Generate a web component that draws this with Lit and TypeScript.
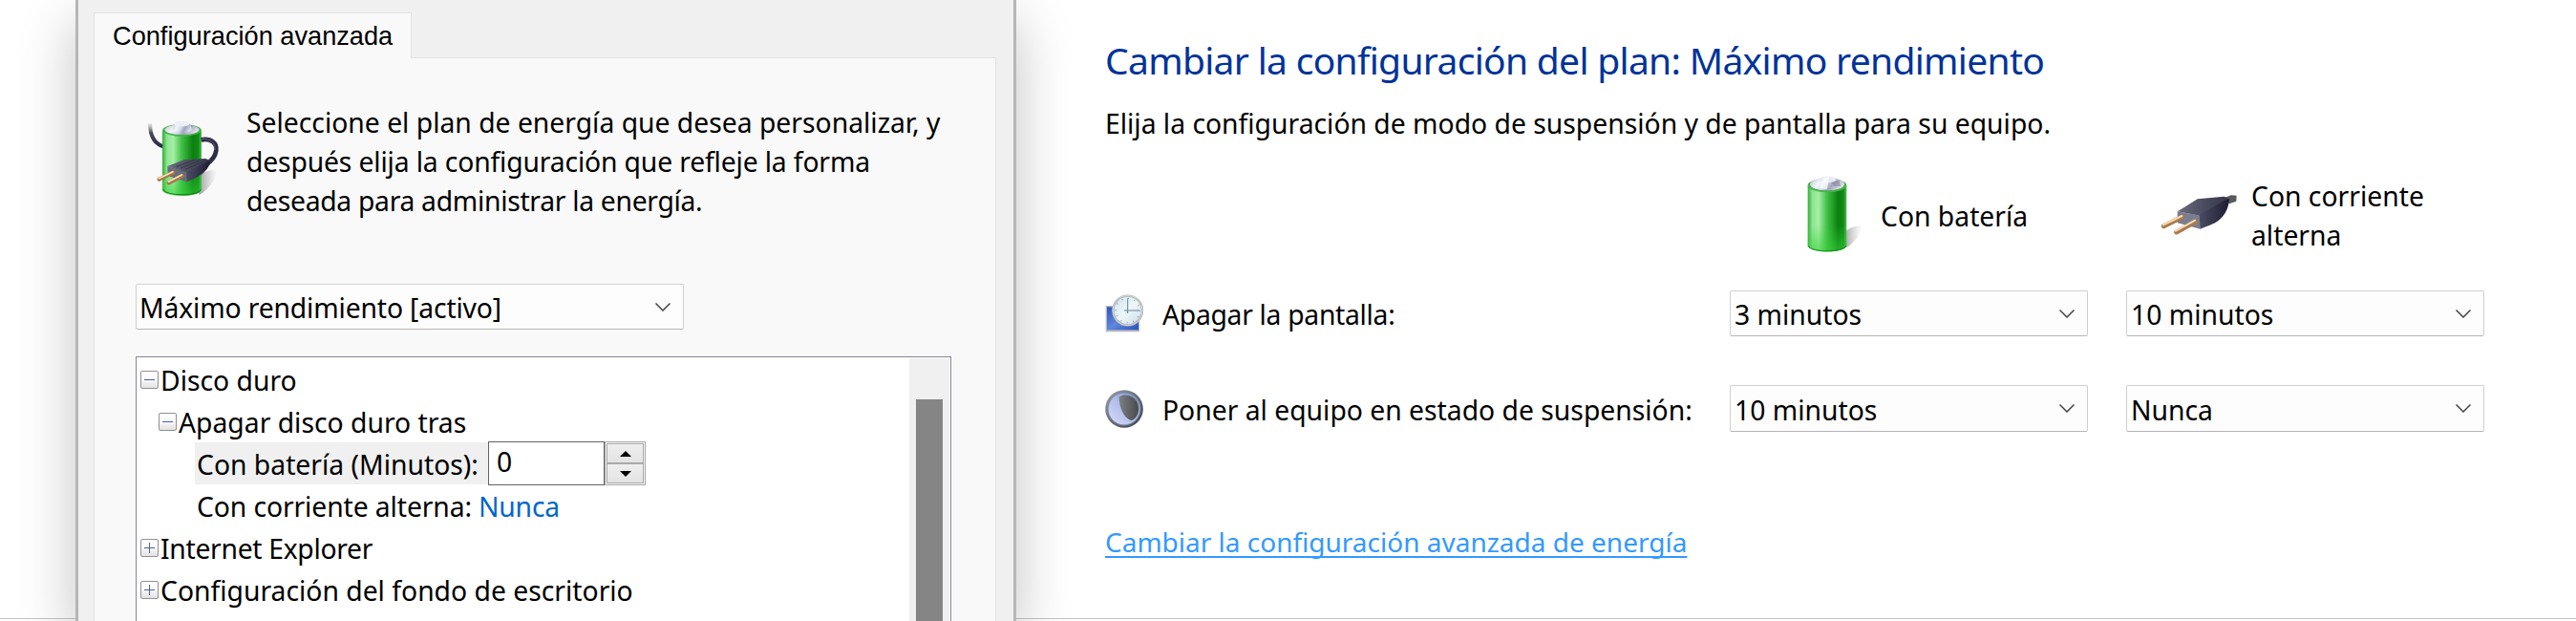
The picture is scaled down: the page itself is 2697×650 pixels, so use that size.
import { html, css, svg, LitElement, nothing } from 'lit'
import { customElement, property } from 'lit/decorators.js'

const batteryGradients = svg`
  <linearGradient id="body" x1="0" x2="1" y1="0" y2="0">
    <stop offset="0" stop-color="#2fae35" />
    <stop offset="0.12" stop-color="#8fe592" />
    <stop offset="0.28" stop-color="#a4efa6" />
    <stop offset="0.5" stop-color="#3fbf43" />
    <stop offset="0.78" stop-color="#0b800f" />
    <stop offset="0.92" stop-color="#138a18" />
    <stop offset="1" stop-color="#4cc152" />
  </linearGradient>
  <linearGradient id="glow" x1="0" x2="0" y1="0" y2="1">
    <stop offset="0.6" stop-color="#35d03a" stop-opacity="0" />
    <stop offset="1" stop-color="#35d03a" stop-opacity="0.6" />
  </linearGradient>
  <linearGradient id="cap" x1="0" x2="1" y1="0" y2="0.3">
    <stop offset="0" stop-color="#b9bccd" />
    <stop offset="0.35" stop-color="#f4f6fb" />
    <stop offset="0.55" stop-color="#d3dcea" />
    <stop offset="0.75" stop-color="#a2a4be" />
    <stop offset="1" stop-color="#dcdce8" />
  </linearGradient>
  <linearGradient id="shadow" x1="0" x2="1" y1="0" y2="0">
    <stop offset="0" stop-color="#555" stop-opacity="0.55" />
    <stop offset="1" stop-color="#999" stop-opacity="0" />
  </linearGradient>
`

const plugGradients = svg`
  <linearGradient id="side" x1="0" x2="1" y1="0" y2="0">
    <stop offset="0" stop-color="#4c4e63" />
    <stop offset="1" stop-color="#1c1b33" />
  </linearGradient>
  <linearGradient id="top" x1="0" x2="1" y1="0" y2="0">
    <stop offset="0" stop-color="#6b6d7e" />
    <stop offset="0.5" stop-color="#4a4c5f" />
    <stop offset="1" stop-color="#33344b" />
  </linearGradient>
`

const powerIcon = html`
  <svg width="100" height="110" viewBox="0 0 300 330">
    <defs>
      ${batteryGradients}${plugGradients}
      <linearGradient id="cable" x1="0" x2="0" y1="0" y2="1">
        <stop offset="0" stop-color="#777" stop-opacity="0.1" />
        <stop offset="0.4" stop-color="#4a4b55" />
        <stop offset="1" stop-color="#2c2b45" />
      </linearGradient>
    </defs>
    <path d="M205 282 C228 272 256 240 262 208 C246 200 226 206 208 220 Z" fill="url(#shadow)" />
    <path d="M51 57 C51 100 66 124 98 131" fill="none" stroke="url(#cable)" stroke-width="12" />
    <path d="M90 82 V266 C94 290 208 290 213 266 V82 Z" fill="url(#body)" />
    <path d="M90 82 V266 C94 290 208 290 213 266 V82 Z" fill="url(#glow)" />
    <path d="M92 264 C98 287 206 287 211 264" fill="none" stroke="#0c7d12" stroke-width="3" />
    <ellipse cx="151.500" cy="79" rx="61" ry="19" fill="#42b447" />
    <ellipse cx="151.500" cy="77" rx="54" ry="16" fill="url(#cap)" />
    <path d="M125 64 C125 48 178 48 178 64 L184 78 C174 90 130 90 121 76 Z" fill="url(#cap)" />
    <ellipse cx="151.500" cy="59" rx="24" ry="8" fill="#e9f0f7" />
    <path d="M212 109 C244 103 262 120 259 143 C256 164 245 176 225 188" fill="none" stroke="#2d2d48" stroke-width="14" />
    <path d="M214 107 C244 103 258 122 255 141" fill="none" stroke="#63647c" stroke-width="3" />
    <path d="M106 192 L160 171 L226 168 L244 176 L230 196 L165 212 Z" fill="url(#top)" />
    <path d="M165 212 L230 178 L242 178 C232 204 218 222 166 241 Z" fill="url(#side)" />
    <path d="M106 192 L165 211 L166 241 L107 222 Z" fill="#686a7f" />
    <path d="M134 194 L192 172 M148 198 L206 175 M162 202 L218 178" stroke="#343548" stroke-width="3" />
    <path d="M80 233 L124 212 M110 244 L152 222" stroke="#a87746" stroke-width="13" stroke-linecap="round" />
    <path d="M79 230 L123 209 M109 241 L151 219" stroke="#ffe2b8" stroke-width="5" stroke-linecap="round" />
  </svg>
`

const batteryIcon = html`
  <svg width="70" height="90" viewBox="45 30 210 270">
    <defs>${batteryGradients}</defs>
    <path d="M182 270 C206 262 232 232 240 202 C222 194 202 204 186 216 Z" fill="url(#shadow)" />
    <path d="M68 72 V262 C74 286 184 286 190 262 V72 Z" fill="url(#body)" />
    <path d="M68 72 V262 C74 286 184 286 190 262 V72 Z" fill="url(#glow)" />
    <path d="M70 262 C78 284 180 284 188 262" fill="none" stroke="#138419" stroke-width="3" />
    <ellipse cx="129" cy="72" rx="61" ry="22" fill="#48b34d" />
    <ellipse cx="129" cy="68" rx="54" ry="20" fill="url(#cap)" />
    <ellipse cx="129" cy="54" rx="29" ry="10" fill="#e6eaf3" />
    <path d="M118 48 L136 46 L128 84 L104 82 Z" fill="#fff" opacity="0.7" />
    <path d="M142 62 L166 56 L172 74 L152 76 Z" fill="#85879f" opacity="0.6" />
  </svg>
`

const plugIcon = html`
  <svg width="87" height="50" viewBox="1164 90 261 150">
    <defs>${plugGradients}</defs>
    <path d="M1378 110 L1398 103 L1415 104 L1414 122 L1392 130 Z" fill="#5a5b5c" />
    <path d="M1229 154 L1292 115 L1376 107 L1394 116 L1372 134 L1300 168 Z" fill="url(#top)" />
    <path d="M1296 166 L1372 122 L1392 114 C1390 146 1376 178 1336 195 L1300 209 Z" fill="url(#side)" />
    <path d="M1229 154 L1298 166 L1301 209 L1229 190 Z" fill="#7b7d91" />
    <path d="M1186 200 L1243 172 M1226 219 L1286 186" stroke="#a97b4c" stroke-width="15" stroke-linecap="round" />
    <path d="M1185 196 L1243 168 M1224 215 L1284 182" stroke="#f8dcb8" stroke-width="6" stroke-linecap="round" />
  </svg>
`

const clockIcon = html`
  <svg width="40" height="40" viewBox="20 22 120 120">
    <defs>
      <linearGradient id="screen" x1="0" x2="1" y1="0" y2="1">
        <stop offset="0" stop-color="#2c55c0" />
        <stop offset="0.5" stop-color="#5f87dc" />
        <stop offset="1" stop-color="#2b51bd" />
      </linearGradient>
      <linearGradient id="dial" x1="0" x2="1" y1="0" y2="1">
        <stop offset="0" stop-color="#c9e2ee" />
        <stop offset="0.5" stop-color="#eef7f8" />
        <stop offset="1" stop-color="#c5dcea" />
      </linearGradient>
    </defs>
    <rect x="22" y="58" width="106" height="82" fill="#b9bbc1" />
    <rect x="26" y="62" width="99" height="72" fill="url(#screen)" />
    <circle cx="91" cy="73" r="46" fill="url(#dial)" stroke="#aeb0b3" stroke-width="7" />
    <circle cx="91" cy="73" r="47" fill="none" stroke="#dddee0" stroke-width="2.500" />
    <circle cx="91" cy="73" r="38" fill="none" stroke="#6e8fae" stroke-width="4" stroke-dasharray="2.500 17.400" />
    <path d="M91 35 V82 M80 73 H128" stroke="#66809a" stroke-width="3" />
  </svg>
`

const moonIcon = html`
  <svg width="40" height="40" viewBox="20 320 120 120">
    <defs>
      <linearGradient id="rim" x1="0" x2="1" y1="0" y2="1">
        <stop offset="0" stop-color="#a0a2a5" />
        <stop offset="0.5" stop-color="#6c6d70" />
        <stop offset="1" stop-color="#3f4144" />
      </linearGradient>
      <linearGradient id="lit" x1="1" x2="0" y1="0" y2="1">
        <stop offset="0" stop-color="#7292c4" />
        <stop offset="0.5" stop-color="#b2bdea" />
        <stop offset="1" stop-color="#dcdcf8" />
      </linearGradient>
      <linearGradient id="dark" x1="0" x2="1" y1="0" y2="0">
        <stop offset="0" stop-color="#7c7f84" />
        <stop offset="1" stop-color="#48494b" />
      </linearGradient>
    </defs>
    <circle cx="80" cy="380" r="59.500" fill="url(#rim)" />
    <circle cx="80" cy="380" r="51" fill="url(#lit)" stroke="#7088b3" stroke-width="3" />
    <path d="M64 342 C84 330 120 338 125 374 C127 396 116 412 102 417 C78 408 64 376 64 342 Z" fill="url(#dark)" />
  </svg>
`

@customElement('power-select')
export class PowerSelect extends LitElement {
  static styles = css`
    :host {
      display: flex;
      align-items: center;
      justify-content: space-between;
      box-sizing: border-box;
      padding: 0 13px 0 4px;
      border: 1px solid #d0d0d0;
      border-bottom-color: #b5b5b5;
      border-radius: 2px;
      background: #fdfdfd;
      white-space: nowrap;
    }

    span {
      padding-top: 2px;
    }

    svg {
      display: block;
    }
  `

  @property() value = ''

  render () {
    return html`
      <span>${this.value}</span>
      <svg width="16" height="9" viewBox="0 0 16 9">
        <path d="M0.500 0.500 L8 8 L15.500 0.500" fill="none" stroke="#444" stroke-width="1.500" />
      </svg>
    `
  }
}

@customElement('tree-toggle')
export class TreeToggle extends LitElement {
  static styles = css`
    :host {
      display: block;
      box-sizing: border-box;
      width: 19px;
      height: 19px;
      border: 1px solid #919191;
      border-radius: 2px;
      background: linear-gradient(#fff, #fafafa 45%, #e2e2e2);
    }

    svg {
      display: block;
    }
  `

  @property({ type: Boolean }) open = false

  render () {
    return html`
      <svg width="17" height="17" viewBox="0 0 17 17">
        <path d="M3 8.500 H14" stroke="#4b63a7" />
        ${this.open ? nothing : svg`<path d="M8.500 3 V14" stroke="#4b63a7" />`}
      </svg>
    `
  }
}

@customElement('advanced-dialog')
export class AdvancedDialog extends LitElement {
  static styles = css`
    :host {
      display: flex;
      flex-direction: column;
      box-sizing: border-box;
      padding: 13px 18px 0 16px;
      border: solid #b6b6b6;
      border-width: 0 3px;
      background: #f0f0f0;
      box-shadow: 0 22px 56px rgba(0, 0, 0, 0.24);
    }

    .tab {
      box-sizing: border-box;
      width: 333px;
      height: 48px;
      margin-bottom: -1px;
      padding-left: 19px;
      border: 1px solid #e3e3e3;
      border-bottom: none;
      background: #f9f9f9;
      font: 27.200px/48px "Liberation Sans", Arial, sans-serif;
      z-index: 1;
    }

    .page {
      flex: 1;
      min-height: 0;
      display: flex;
      flex-direction: column;
      padding: 46px 46px 0 43px;
      border: 1px solid #e3e3e3;
      border-bottom: none;
      background: #f9f9f9;
    }

    .intro {
      display: flex;
      gap: 18px;
      margin-left: -2px;
      white-space: nowrap;
    }

    .intro svg {
      margin-top: 3px;
    }

    .intro p {
      margin: 1px 0 0;
      line-height: 41px;
    }

    .tight {
      letter-spacing: -0.150px;
    }

    .tighter {
      letter-spacing: -0.300px;
    }

    .plan {
      width: 574px;
      height: 48px;
      margin-top: 66px;
      padding-left: 3px;
    }

    .tree {
      flex: 1;
      min-height: 0;
      display: flex;
      justify-content: space-between;
      margin-top: 28px;
      padding: 1px 1px 0 4px;
      border: 1px solid #828790;
      border-bottom: none;
      background: #fff;
      overflow: hidden;
    }

    .row {
      display: flex;
      align-items: center;
      gap: 2px;
      height: 44px;
      white-space: nowrap;
    }

    .row span {
      padding-top: 2px;
    }

    .child {
      padding-left: 19px;
    }

    .leaf {
      gap: 0;
      padding-left: 57px;
    }

    .selected {
      box-sizing: border-box;
      width: 307px;
      height: 44px;
      padding-left: 2px;
      background: #f0f0f0;
      line-height: 46px;
    }

    .edit {
      box-sizing: border-box;
      width: 122px;
      height: 46px;
      padding-left: 8px;
      border: 1px solid #646464;
      background: #fff;
      line-height: 41px;
    }

    .spinner {
      display: flex;
      flex-direction: column;
      box-sizing: border-box;
      width: 43px;
      height: 46px;
      padding: 1px;
      border: 1px solid #a9a9a9;
      background: #f4f4f4;
    }

    .spinner div {
      flex: 1;
      display: flex;
      align-items: center;
      justify-content: center;
      border: 1px solid #a9a9a9;
      background: linear-gradient(#efefef, #e3e3e3);
    }

    .leaf-label {
      padding-left: 2px;
      letter-spacing: -0.100px;
    }

    .value {
      margin-left: 7px;
      color: #0066cc;
      letter-spacing: -0.200px;
    }

    .scrollbar {
      box-sizing: border-box;
      width: 42px;
      padding: 43px 7px 0;
      background: #f0f0f0;
    }

    .thumb {
      height: 100%;
      background: #858585;
    }
  `

  render () {
    return html`
      <div class="tab">Configuración avanzada</div>
      <div class="page">
        <div class="intro">
          ${powerIcon}
          <p>
            Seleccione el plan de energía que desea personalizar, y<br />
            <span class="tight">después elija la configuración que refleje la forma</span><br />
            <span class="tighter">deseada para administrar la energía.</span>
          </p>
        </div>
        <power-select class="plan tight" value="Máximo rendimiento [activo]"></power-select>
        <div class="tree">
          <div>
            <div class="row"><tree-toggle open></tree-toggle><span>Disco duro</span></div>
            <div class="row child"><tree-toggle open></tree-toggle><span>Apagar disco duro tras</span></div>
            <div class="row leaf">
              <div class="selected">Con batería (Minutos):</div>
              <div class="edit">0</div>
              <div class="spinner">
                <div><svg width="12" height="6"><path d="M0 6 L6 0 L12 6 Z" /></svg></div>
                <div><svg width="12" height="6"><path d="M0 0 L6 6 L12 0 Z" /></svg></div>
              </div>
            </div>
            <div class="row leaf">
              <span class="leaf-label">Con corriente alterna:</span><span class="value">Nunca</span>
            </div>
            <div class="row"><tree-toggle></tree-toggle><span class="tighter">Internet Explorer</span></div>
            <div class="row"><tree-toggle></tree-toggle><span>Configuración del fondo de escritorio</span></div>
          </div>
          <div class="scrollbar"><div class="thumb"></div></div>
        </div>
      </div>
    `
  }
}

@customElement('plan-settings')
export class PlanSettings extends LitElement {
  static styles = css`
    :host {
      display: block;
      box-sizing: border-box;
      padding: 37px 0 0 93px;
      white-space: nowrap;
    }

    h1 {
      margin: 0 0 21px;
      color: #003399;
      font-size: 39px;
      font-weight: normal;
      line-height: 52px;
      letter-spacing: -0.690px;
    }

    p {
      margin: 0 0 32px;
      line-height: 38px;
    }

    .grid {
      display: grid;
      grid-template-columns: 654px 375px 40px 375px;
      grid-template-rows: 90px 34px 48px 51px 49px;
    }

    .head {
      display: flex;
      align-items: center;
      line-height: 41px;
    }

    .head span {
      padding-top: 2px;
    }

    .battery {
      grid-column: 2;
      gap: 14px;
      padding-left: 74px;
    }

    .plug {
      grid-column: 4;
      gap: 12px;
      padding-left: 32px;
    }

    .label {
      display: flex;
      align-items: center;
      gap: 20px;
    }

    .label span {
      padding-top: 2px;
    }

    .screen {
      letter-spacing: -0.300px;
    }

    .first {
      grid-row: 3;
    }

    .second {
      grid-row: 5;
    }

    .ac {
      grid-column: 4;
    }

    a {
      display: inline-block;
      margin-top: 96px;
      color: #3399ff;
      font-size: 28px;
      line-height: 38px;
      text-decoration: underline 2px;
      text-underline-offset: 4px;
      text-decoration-skip-ink: none;
    }
  `

  render () {
    return html`
      <h1>Cambiar la configuración del plan: Máximo rendimiento</h1>
      <p>Elija la configuración de modo de suspensión y de pantalla para su equipo.</p>
      <div class="grid">
        <div class="head battery">${batteryIcon}<span>Con batería</span></div>
        <div class="head plug">${plugIcon}<span>Con corriente<br />alterna</span></div>
        <div class="label first">${clockIcon}<span class="screen">Apagar la pantalla:</span></div>
        <power-select class="first" value="3 minutos"></power-select>
        <power-select class="first ac" value="10 minutos"></power-select>
        <div class="label second">${moonIcon}<span>Poner al equipo en estado de suspensión:</span></div>
        <power-select class="second" value="10 minutos"></power-select>
        <power-select class="second ac" value="Nunca"></power-select>
      </div>
      <a>Cambiar la configuración avanzada de energía</a>
    `
  }
}

@customElement('app-root')
export class AppRoot extends LitElement {
  static styles = css`
    :host {
      display: block;
      height: 650px;
      overflow: hidden;
      background: #fff;
      color: #000;
      font: 28.300px "Noto Sans", "Open Sans", sans-serif;
    }

    .desktop {
      display: flex;
      height: 647px;
      padding-left: 79px;
      border-bottom: 1px solid #c4c4c4;
    }

    advanced-dialog {
      flex: none;
      width: 985px;
      height: 650px;
    }

    plan-settings {
      flex: 1;
      z-index: 1;
    }
  `

  render () {
    return html`
      <div class="desktop">
        <advanced-dialog></advanced-dialog>
        <plan-settings></plan-settings>
      </div>
    `
  }
}
